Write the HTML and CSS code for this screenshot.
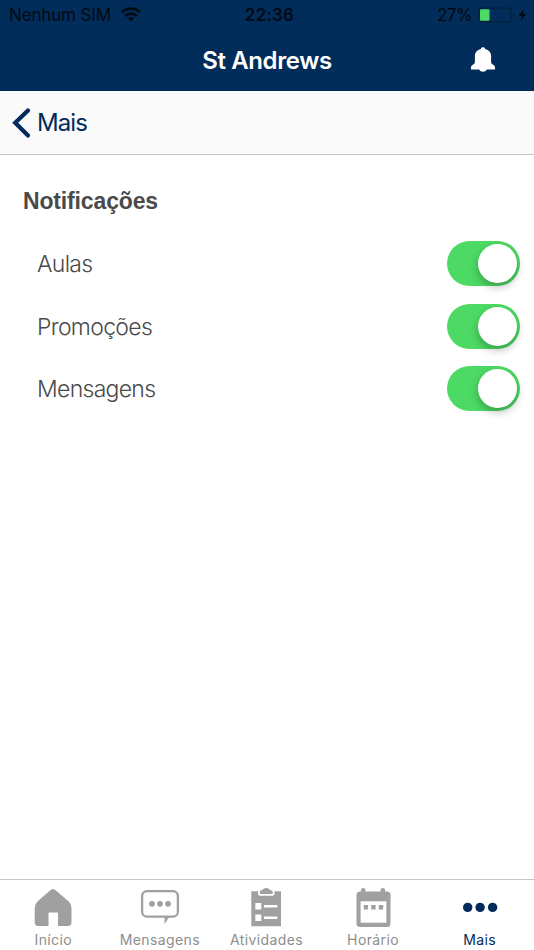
FILE: index.html
```html
<!DOCTYPE html>
<html lang="pt">
<head>
    <meta charset="UTF-8">
    <meta name="viewport" content="width=device-width, initial-scale=1.0">
    <title>St Andrews</title>
    <link rel="stylesheet" href="styles.css">
</head>
<body>
    <header class="header">
        <!-- Status bar -->
        <div class="status-bar">
            <div class="carrier">
                <span class="carrier-name">Nenhum SIM</span>
                <svg class="wifi" width="20" height="15" viewBox="0 0 20 15">
                    <path d="M1 5.2a13 13 0 0 1 18 0" fill="none" stroke="#030a14" stroke-width="2.9"/>
                    <path d="M4.2 8.9a8.6 8.6 0 0 1 11.6 0" fill="none" stroke="#030a14" stroke-width="2.7"/>
                    <path d="M6.9 11.3a4.6 4.6 0 0 1 6.2 0L10 14.4z" fill="#030a14"/>
                </svg>
            </div>
            <span class="clock">22:36</span>
            <div class="power">
                <span class="percent">27%</span>
                <svg width="50" height="16" viewBox="0 0 50 16">
                    <rect x="1" y="1.2" width="32" height="13.8" rx="2.2" fill="none" stroke="#02203f" stroke-width="1.3"/>
                    <rect x="2" y="2.3" width="9.5" height="11.4" rx="1" fill="#4cd964"/>
                    <path d="M35.5 5.5q2 2.3 0 4.8z" fill="#02203f"/>
                    <path d="M46 1.600l-5.300 7.200h3.200l-1.300 5.400 5.500-7.400h-3.300z" fill="#030a14"/>
                </svg>
            </div>
        </div>
        <div class="title-bar">
            <h1>St Andrews</h1>
            <button class="bell" aria-label="Notificações">
                <svg width="24" height="26" viewBox="0 0 24 26" fill="#fff">
                    <path d="M12 .3c1.1 0 1.9.7 2.2 1.6 3.6.8 5.900 3.500 5.900 7.100v5.800c0 1.500.5 2.100 2 3 1.400.8 1.900 1.600 1.900 3v1.700H15.800c-.8 1.500-2.100 2.200-3.800 2.200s-3-.7-3.800-2.200H0v-1.700c0-1.400.5-2.200 1.900-3 1.500-.9 2-1.500 2-3V9c0-3.600 2.300-6.300 5.900-7.100C10.100 1 10.900.3 12 .3z"/>
                </svg>
            </button>
        </div>
    </header>

    <nav class="back-bar">
        <a class="back" href="#">
            <svg width="20" height="32" viewBox="0 0 20 32">
                <path d="M17 3.400L4.200 15.800l12.800 12.700" fill="none" stroke="#022b5b" stroke-width="4.200" stroke-linecap="round" stroke-linejoin="miter"/>
            </svg>
            <span>Mais</span>
        </a>
    </nav>

    <main class="settings">
        <h2>Notificações</h2>
        <div class="setting">
            <label for="aulas">Aulas</label>
            <input class="switch" type="checkbox" id="aulas" checked>
        </div>
        <div class="setting">
            <label for="promocoes">Promoções</label>
            <input class="switch" type="checkbox" id="promocoes" checked>
        </div>
        <div class="setting">
            <label for="mensagens">Mensagens</label>
            <input class="switch" type="checkbox" id="mensagens" checked>
        </div>
    </main>

    <!-- Bottom tabs -->
    <nav class="tabs">
        <a class="tab" href="#">
            <svg width="40" height="40" viewBox="0 0 40 40" fill="#a0a0a0">
                <path d="M18 1.700q2-1.500 4 0l13.500 11.500q3 2.800 3 6.500V34q0 4-3.500 4H25V24.500h-9.500V38H5q-3.300 0-3.300-4V19.700q0-3.700 3-6.500z"/>
            </svg>
            <span>Início</span>
        </a>
        <a class="tab" href="#">
            <svg width="40" height="40" viewBox="0 0 40 40">
                <rect x="2.100" y="3.100" width="35.800" height="25.600" rx="5" fill="none" stroke="#a0a0a0" stroke-width="2.300"/>
                <path d="M24.600 28.500h5L24.500 36z" fill="#a0a0a0"/>
                <circle cx="12" cy="15.800" r="2.900" fill="#a0a0a0"/>
                <circle cx="20" cy="15.800" r="2.900" fill="#a0a0a0"/>
                <circle cx="28" cy="15.800" r="2.900" fill="#a0a0a0"/>
            </svg>
            <span>Mensagens</span>
        </a>
        <a class="tab" href="#">
            <svg width="40" height="40" viewBox="0 0 40 40">
                <path d="M5.300 3.200H12v2.500q0 2 2 2h12.500q2 0 2-2V3.200H35v35H5.300z" fill="#a0a0a0"/>
                <path d="M13.800 6V4q0-2 2.500-2 1.200-2 3.900-2T24 2q2.700 0 2.700 2v2z" fill="#a0a0a0"/>
                <path d="M9.300 15h6v6.400h-6zM9.300 26.500h6v6.400h-6z" fill="#fff"/>
                <path d="M19 18.200h11.300M19 29.700h11.300" stroke="#fff" stroke-width="2.500" stroke-linecap="round"/>
            </svg>
            <span>Atividades</span>
        </a>
        <a class="tab" href="#">
            <svg width="40" height="40" viewBox="0 0 40 40" fill="#a0a0a0">
                <path d="M8 3.500V1.500Q8 0 10.200 0t2.200 1.500v2h15.200v-2Q27.600 0 29.800 0T32 1.500v2h2q3.500 0 3.500 3.500v28.500q0 3.500-3.500 3.500H7q-3.500 0-3.500-3.500V7Q3.500 3.500 7 3.500z"/>
                <rect x="7.600" y="13.300" width="25.800" height="21.400" fill="#fff"/>
                <path d="M10.700 17h4.400v4.400h-4.400zM18.200 17h4.400v4.400h-4.400zM25.800 17h4.400v4.400h-4.400z"/>
            </svg>
            <span>Horário</span>
        </a>
        <a class="tab active" href="#">
            <svg width="40" height="40" viewBox="0 0 40 40" fill="#022b5b">
                <circle cx="7.700" cy="19.400" r="4.700"/>
                <circle cx="20.100" cy="19.400" r="4.700"/>
                <circle cx="32.600" cy="19.400" r="4.700"/>
            </svg>
            <span>Mais</span>
        </a>
    </nav>
</body>
</html>
```
FILE: styles.css
```css
* {
    margin: 0;
    padding: 0;
    box-sizing: border-box;
}
body {
    font-family: Inter, 'Liberation Sans', sans-serif;
    display: flex;
    flex-direction: column;
    height: 100vh;
    background: #fff;
    color: #4a4a4a;
}
a {
    text-decoration: none;
}
svg {
    display: block;
}

/* Header */
.header {
    height: 91px;
    background: #022c59;
}
.status-bar {
    display: grid;
    grid-template-columns: 1fr auto 1fr;
    align-items: center;
    height: 29px;
    padding: 0 6px 0 9px;
    font-size: 17px;
    color: #030a14;
}
.carrier {
    display: flex;
    align-items: center;
    gap: 10px;
}
.carrier-name {
    letter-spacing: -0.15px;
}
.clock {
    margin-left: 2px;
    font-weight: 600;
    letter-spacing: 0.2px;
}
.power {
    display: flex;
    align-items: center;
    justify-content: flex-end;
    gap: 6px;
}
.percent {
    letter-spacing: -0.6px;
}
.title-bar {
    display: grid;
    grid-template-columns: 1fr auto 1fr;
    align-items: center;
    height: 62px;
}
h1 {
    grid-column: 2;
    font-size: 24px;
    font-weight: 600;
    letter-spacing: -0.4px;
    color: #fff;
}
.bell {
    justify-self: end;
    margin-right: 39px;
    border: none;
    background: none;
}

/* Back bar */
.back-bar {
    display: flex;
    align-items: center;
    height: 64px;
    background: #fafafa;
    border-bottom: 1px solid #c4c4c4;
}
.back {
    display: flex;
    align-items: center;
    gap: 6px;
    padding-left: 11px;
    font-size: 24px;
    letter-spacing: -0.9px;
    color: #022b5b;
}

/* Settings list */
.settings {
    flex: 1;
    padding: 30px 14px 0 23px;
}
h2 {
    height: 32px;
    margin-bottom: 15px;
    font-family: 'Liberation Sans', sans-serif;
    font-size: 23px;
    line-height: 32px;
    letter-spacing: -0.15px;
}
.setting {
    display: flex;
    align-items: center;
    justify-content: space-between;
    height: 62.7px;
    padding-left: 14px;
    font-size: 23px;
    font-weight: 300;
    letter-spacing: -0.7px;
}
.setting label {
    padding-top: 1px;
}
.switch {
    appearance: none;
    display: flex;
    align-items: center;
    justify-content: flex-end;
    width: 73px;
    height: 45px;
    padding-right: 3px;
    border-radius: 23px;
    background: #4cd964;
}
.switch::before {
    content: '';
    width: 39px;
    height: 39px;
    border-radius: 50%;
    background: #fff;
    box-shadow: 0 4px 9px rgba(0, 0, 0, 0.27);
}
.switch:not(:checked) {
    justify-content: flex-start;
    padding: 0 0 0 3px;
    background: #e5e5e5;
}

/* Tabs */
.tabs {
    display: grid;
    grid-template-columns: repeat(5, 1fr);
    height: 71px;
    padding-right: 1px;
    border-top: 1px solid #c4c4c4;
}
.tab {
    display: flex;
    flex-direction: column;
    align-items: center;
    padding-top: 8px;
    font-size: 14px;
    line-height: 17px;
    letter-spacing: 0.4px;
    color: #8e8e8e;
}
.tab svg {
    margin-bottom: 3px;
    overflow: visible;
}
.tab.active {
    color: #022b5b;
}
```
